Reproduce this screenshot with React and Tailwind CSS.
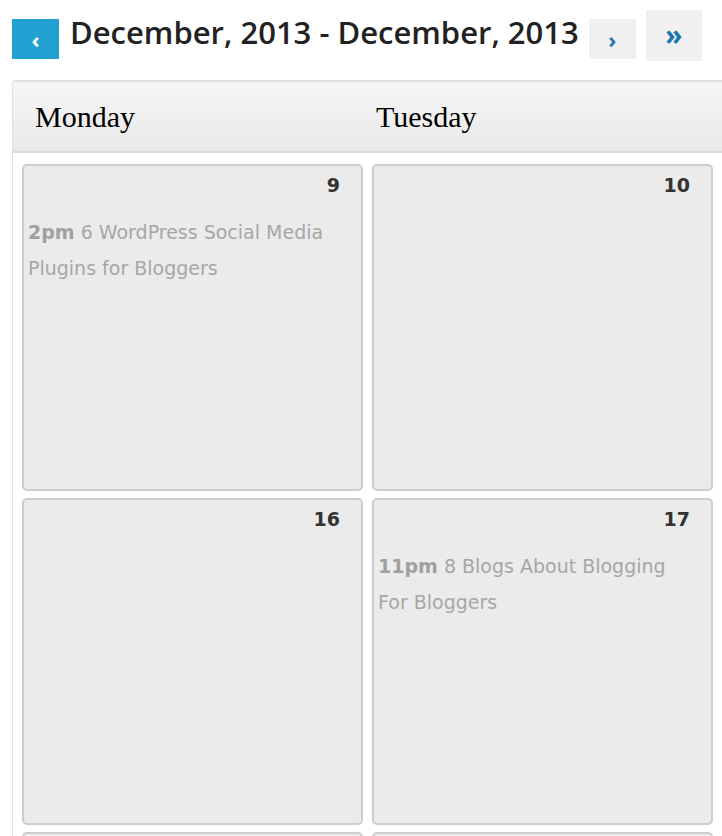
import React from 'react';

const weeks = [
    [
        { day: 9, events: [{ time: '2pm', title: '6 WordPress Social Media Plugins for Bloggers' }] },
        { day: 10, events: [] },
    ],
    [
        { day: 16, events: [] },
        { day: 17, events: [{ time: '11pm', title: '8 Blogs About Blogging For Bloggers' }] },
    ],
    // next week only peeks in at the bottom edge
    [
        { day: 23, events: [], hidden: true },
        { day: 24, events: [], hidden: true },
    ],
];

const DayCell = ({ day, events, hidden }) => (
    <div
        className="h-[327px] rounded-[5px] border-2 border-[#cdcdcd] bg-[#ebebeb]"
        style={{ fontFamily: '"DejaVu Sans", "Open Sans", sans-serif' }}
    >
        {!hidden && (
            <div className="pt-[5px] pr-[21px] text-right text-[19px] leading-[28px] font-bold text-[#333333]">
                {day}
            </div>
        )}
        {events.map((ev) => (
            <div
                key={ev.title}
                className="mt-[15px] pl-[4px] pr-[30px] text-[19px] leading-[36px] text-[#a6a6a6]"
            >
                <span className="font-bold text-[#a0a0a0]">{ev.time}</span> {ev.title}
            </div>
        ))}
    </div>
);

const App = () => {
    return (
        <div
            className="w-[722px] h-[836px] overflow-hidden bg-white"
            style={{ fontFamily: '"Open Sans", "Liberation Sans", sans-serif' }}
        >
            <div className="flex items-start pt-[10px] pl-[12px]">
                <button className="mt-[9px] w-[47px] h-[40px] bg-[#21a0d2] text-white text-[22px] font-bold leading-none flex items-center justify-center">
                    ‹
                </button>
                <h1 className="mt-[7px] ml-[11px] text-[31px] leading-none font-semibold text-[#222222] whitespace-nowrap">
                    December, 2013 - December, 2013
                </h1>
                <button className="mt-[9px] ml-[10px] w-[47px] h-[40px] bg-[#f0f0f0] text-[#1a78ad] text-[22px] font-bold leading-none flex items-center justify-center">
                    ›
                </button>
                <button className="ml-[10px] w-[56px] h-[51px] bg-[#f0f0f0] text-[#1a78ad] text-[28px] font-bold leading-none flex items-center justify-center pb-[3px]">
                    »
                </button>
            </div>

            <div className="mt-[19px] ml-[12px] w-[760px] border-l border-t-2 border-[#e0e0e0] rounded-tl-[4px]">
                <div
                    className="flex h-[71px] border-b-2 border-[#dadada] bg-gradient-to-b from-[#f6f6f6] to-[#e9e9e9] text-[30px] text-black"
                    style={{ fontFamily: '"Liberation Serif", "DejaVu Serif", serif' }}
                >
                    <div className="w-[350px] pl-[22px] flex items-center">Monday</div>
                    <div className="w-[350px] pl-[13px] flex items-center">Tuesday</div>
                </div>
                <div className="grid grid-cols-[341px_341px] gap-x-[9px] gap-y-[7px] pl-[9px] pt-[11px]">
                    {weeks.map((week) =>
                        week.map((cell) => (
                            <DayCell key={cell.day} day={cell.day} events={cell.events} hidden={cell.hidden} />
                        ))
                    )}
                </div>
            </div>
        </div>
    );
};

export default App;
